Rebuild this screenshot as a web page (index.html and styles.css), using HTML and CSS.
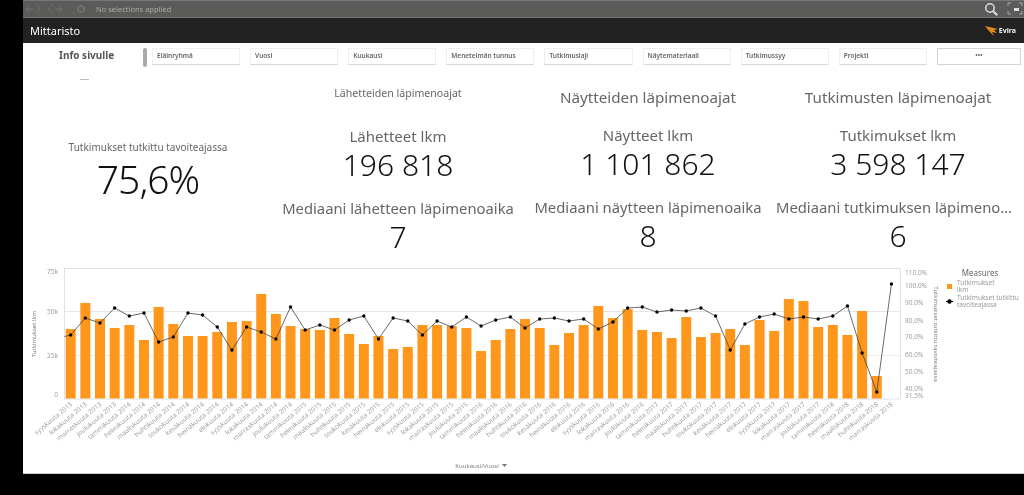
FILE: index.html
```html
<!DOCTYPE html>
<html lang="fi">
<head>
    <meta charset="UTF-8">
    <title>Mittaristo</title>
    <link rel="stylesheet" href="styles.css">
    <script src="chart.js" defer></script>
</head>
<body>
    <div class="app">
        <div class="toolbar">
            <div class="tool-icons">
                <svg width="16" height="12" viewBox="0 0 16 12"><path d="M1 6h7M4 3 1 6l3 3M11 2h2M11 10h2M14 4v4" fill="none" stroke="#727270" stroke-width="1"/></svg>
                <svg width="16" height="12" viewBox="0 0 16 12"><path d="M3 2h2M3 10h2M1 4v4M7 6h7M11 3l3 3-3 3" fill="none" stroke="#727270" stroke-width="1"/></svg>
                <svg width="16" height="12" viewBox="0 0 16 12"><path d="M1 2v2M1 8v2M3 1h1M3 11h1" fill="none" stroke="#727270"/><circle cx="10" cy="6" r="3" fill="none" stroke="#727270" stroke-width="1.5"/></svg>
            </div>
            <span class="no-selections">No selections applied</span>
            <div class="tool-right">
                <svg width="16" height="16" viewBox="0 0 16 16"><circle cx="7" cy="7" r="4.2" fill="none" stroke="#ddd" stroke-width="1.5"/><path d="M10.2 10.2l4 4" stroke="#ddd" stroke-width="2"/></svg>
                <svg width="16" height="14" viewBox="0 0 16 14"><path d="M1 4V1h3M12 1h3v3M1 9v3h3M15 9v3h-3" fill="none" stroke="#aaa"/><rect x="7" y="6" width="5" height="3" fill="#ddd"/></svg>
            </div>
        </div>

        <header class="titlebar">
            <span class="app-title">Mittaristo</span>
            <span class="logo">
                <svg width="14" height="12" viewBox="0 0 14 12"><path d="M0 1 13 4 9 5 12 8 7 7 9 11 4 6Z" fill="#e08a1c"/></svg>
                Evira
            </span>
        </header>

        <div class="filters">
            <div class="info-cell">
                <b>Info sivulle</b>
                <i class="dash"></i>
            </div>
            <div class="handle"></div>
            <div class="filter-list">
                <div class="filter">Eläinryhmä</div>
                <div class="filter">Vuosi</div>
                <div class="filter">Kuukausi</div>
                <div class="filter">Menetelmän tunnus</div>
                <div class="filter">Tutkimuslaji</div>
                <div class="filter">Näytemateriaali</div>
                <div class="filter">Tutkimussyy</div>
                <div class="filter">Projekti</div>
                <div class="filter more">•••</div>
            </div>
        </div>

        <main class="kpis">
            <section class="kpi-col first">
                <h3 class="small-title">Tutkimukset tutkittu tavoiteajassa</h3>
                <div class="big-value">75,6%</div>
            </section>
            <section class="kpi-col">
                <h2 class="col-title tiny">Lähetteiden läpimenoajat</h2>
                <h3 class="kpi-label">Lähetteet lkm</h3>
                <div class="kpi-value">196 818</div>
                <h3 class="kpi-label median">Mediaani lähetteen läpimenoaika</h3>
                <div class="kpi-value">7</div>
            </section>
            <section class="kpi-col">
                <h2 class="col-title">Näytteiden läpimenoajat</h2>
                <h3 class="kpi-label">Näytteet lkm</h3>
                <div class="kpi-value">1 101 862</div>
                <h3 class="kpi-label median">Mediaani näytteen läpimenoaika</h3>
                <div class="kpi-value">8</div>
            </section>
            <section class="kpi-col">
                <h2 class="col-title">Tutkimusten läpimenoajat</h2>
                <h3 class="kpi-label">Tutkimukset lkm</h3>
                <div class="kpi-value">3 598 147</div>
                <h3 class="kpi-label median clip">Mediaani tutkimuksen läpimenoaika</h3>
                <div class="kpi-value">6</div>
            </section>
        </main>

        <div class="chart-wrap">
            <svg id="chart" width="1001" height="212" viewBox="23 262 1001 212"></svg>
        </div>
    </div>
</body>
</html>
```

FILE: styles.css
```css
html, body {
    margin: 0;
    padding: 0;
    height: 495px;
    overflow: hidden;
    background-color: #000;
    font-family: "Noto Sans", sans-serif;
}

.app {
    margin-left: 23px;
    width: 1001px;
    height: 474px;
    background-color: #fff;
    display: flex;
    flex-direction: column;
    filter: blur(0.5px);
}

.toolbar {
    height: 18px;
    box-sizing: border-box;
    background-color: #5b5b59;
    border-top: 1px solid #777;
    border-bottom: 1px solid #777;
    display: flex;
    align-items: center;
    color: #a8a8a6;
    font-size: 7.5px;
}

.tool-icons {
    display: flex;
    gap: 7px;
    width: 73px;
    padding-left: 2px;
    box-sizing: border-box;
}

.no-selections {
    flex: 1;
}

.tool-right {
    display: flex;
    gap: 8px;
    align-items: center;
    padding-right: 1px;
}

.titlebar {
    height: 25px;
    background-color: #222;
    color: #fff;
    display: flex;
    align-items: center;
    justify-content: space-between;
    padding: 0 8px 0 7px;
}

.app-title {
    font-size: 11px;
}

.logo {
    display: flex;
    align-items: center;
    gap: 0;
    color: #eee;
    font-size: 7px;
    font-weight: 700;
}

.filters {
    height: 30px;
    display: flex;
    padding-top: 5px;
    box-sizing: border-box;
}

.info-cell {
    width: 120px;
    position: relative;
    color: #555;
    font-size: 10px;
    padding-left: 36px;
    box-sizing: border-box;
    line-height: 14px;
}

.dash {
    position: absolute;
    left: 57px;
    top: 31px;
    width: 9px;
    height: 1px;
    background-color: #bbb;
}

.handle {
    width: 4px;
    height: 19px;
    background-color: #aaa;
    border-radius: 2px;
}

.filter-list {
    flex: 1;
    display: flex;
    gap: 10px;
    margin: 0 3px 0 5px;
}

.filter {
    flex: 1;
    height: 17px;
    box-sizing: border-box;
    border: 1px solid #efefef;
    border-bottom-color: #d8d8d8;
    font-size: 6.5px;
    font-weight: 600;
    color: #666;
    line-height: 14px;
    padding-left: 4px;
}

.filter.more {
    text-align: center;
    padding: 0;
    border-color: #d4d4d4;
}

.kpis {
    height: 189px;
    display: flex;
}

.kpi-col {
    width: 250px;
    min-width: 0;
    text-align: center;
    color: #666;
}

.kpi-col.first {
    padding-top: 66px;
}

.kpi-col h2, .kpi-col h3 {
    margin: 0;
    font-weight: 400;
}

.small-title {
    font-size: 10px;
    line-height: 16px;
}

.big-value {
    font-size: 39px;
    line-height: 48px;
    color: #111;
    letter-spacing: -1px;
    font-weight: 300;
}

.col-title {
    font-size: 15.2px;
    line-height: 20px;
    height: 38px;
    padding-top: 14px;
}

.col-title.tiny {
    font-size: 10.6px;
    line-height: 14px;
    height: 40px;
    padding-top: 13px;
}

.kpi-label {
    font-size: 15px;
    line-height: 20px;
}

.kpi-label.median {
    margin-top: 14px !important;
    font-size: 14.8px;
    white-space: nowrap;
}

.kpi-label.clip {
    overflow: hidden;
    text-overflow: ellipsis;
    margin-left: 3px;
    margin-right: 9px;
}

.kpi-value {
    font-size: 30px;
    line-height: 38px;
    color: #111;
    font-weight: 300;
}

.chart-wrap {
    height: 212px;
    border-bottom: 1px solid #ccc;
    box-sizing: border-box;
}

#chart {
    display: block;
}

.tick {
    font-size: 6.5px;
    fill: #a0a0a0;
}

.axis-title {
    font-size: 6px;
    fill: #808080;
}

.legend-title {
    font-size: 8px;
    fill: #666;
}

.legend-text {
    font-size: 6.5px;
    fill: #999;
}
```

FILE: chart.js
```js
// bar tops and line points, in plot pixels
var barTops = [329, 303, 319, 328, 325, 340, 307, 324, 336, 336, 332, 322, 321, 294, 314, 326, 329, 330, 318, 334,
    344, 336, 349, 347, 325, 325, 326, 328, 351, 340, 329, 319, 328, 345, 333, 325, 306, 318, 309, 330,
    332, 338, 317, 337, 333, 329, 345, 320, 331, 299, 301, 327, 325, 335, 311, 376];
var linePts = [335, 318, 323, 308, 316, 313, 342, 337, 313, 315, 327, 350, 327, 332, 339, 307, 330, 325, 330, 320,
    316, 339, 318, 321, 335, 321, 327, 317, 326, 320, 317, 328, 319, 318, 321, 319, 329, 322, 308, 307,
    312, 310, 311, 308, 316, 350, 324, 317, 314, 319, 317, 319, 316, 306, 353, 392, 284];
var months = ["tammikuuta", "helmikuuta", "maaliskuuta", "huhtikuuta", "toukokuuta", "kesäkuuta", "heinäkuuta",
    "elokuuta", "syyskuuta", "lokakuuta", "marraskuuta", "joulukuuta"];

var x0 = 70.7, step = 14.656, base = 398.5;
var svg = "";

function line(x1, y1, x2, y2, color) {
    return '<line x1="' + x1 + '" y1="' + y1 + '" x2="' + x2 + '" y2="' + y2 + '" stroke="' + color + '"/>';
}

function text(cls, x, y, anchor, str, extra) {
    return '<text class="' + cls + '" x="' + x + '" y="' + y + '" text-anchor="' + anchor + '"' + (extra || "") + '>' + str + '</text>';
}

// grid
svg += line(64, 268.5, 900, 268.5, "#e2e2e2");
svg += line(64, 311.5, 900, 311.5, "#e6e6e6");
svg += line(64, 355.5, 900, 355.5, "#eeeeee");
svg += line(64.5, 268, 64.5, 399, "#e2e2e2");
svg += line(900.5, 268, 900.5, 399, "#e2e2e2");
svg += line(64, 399, 900, 399, "#d8e4ee");

// left axis
[["75k", 274], ["50k", 314], ["25k", 358], ["0", 397]].forEach(function (t) {
    svg += text("tick", 58, t[1], "end", t[0]);
});
svg += text("axis-title", 36, 334, "middle", "Tutkimukset lkm", ' transform="rotate(-90 36 334)"');

// right axis
[["110.0%", 275], ["100.0%", 288], ["90.0%", 305], ["80.0%", 323], ["70.0%", 339], ["60.0%", 357],
    ["50.0%", 374], ["40.0%", 391], ["31.5%", 398]].forEach(function (t) {
    svg += text("tick", 905, t[1], "start", t[0]);
});
svg += text("axis-title", 934, 334, "middle", "Tutkimukset tutkittu tavoiteajassa", ' transform="rotate(90 934 334)"');

// bars
barTops.forEach(function (top, i) {
    svg += '<rect x="' + (x0 + i * step - 5) + '" y="' + top + '" width="10" height="' + (base - top) + '" fill="#ff971d"/>';
});

// line with a stub coming in from the left edge
var pts = "64.5,336.5";
linePts.forEach(function (y, i) {
    pts += " " + (x0 + i * step) + "," + y;
});
svg += '<polyline points="' + pts + '" fill="none" stroke="#444" stroke-width="0.8"/>';
linePts.forEach(function (y, i) {
    svg += '<circle cx="' + (x0 + i * step) + '" cy="' + y + '" r="1.7" fill="#000"/>';
});

// month labels, syyskuu 2013 -> huhtikuu 2018 and then marraskuu 2018
for (var i = 0; i < 57; i++) {
    var total = 8 + i;
    var label = months[total % 12] + " " + (2013 + Math.floor(total / 12));
    if (i == 56) label = "marraskuuta 2018";
    var x = x0 + i * step + 2;
    svg += text("tick", x, 405, "end", label, ' transform="rotate(-40 ' + x + ' 405)"');
}

svg += text("axis-title", 477, 468, "middle", "Kuukausi/Vuosi");
svg += '<path d="M502 464h5l-2.5 3z" fill="#777"/>';

// legend
svg += text("legend-title", 980, 276, "middle", "Measures");
svg += '<rect x="947" y="284" width="5" height="5" fill="#ff971d"/>';
svg += text("legend-text", 957, 285, "start", "Tutkimukset");
svg += text("legend-text", 957, 292, "start", "lkm");
svg += line(946, 301.5, 953, 301.5, "#000");
svg += '<circle cx="949.5" cy="301.5" r="2.2" fill="#000"/>';
svg += text("legend-text", 957, 300, "start", "Tutkimukset tutkittu");
svg += text("legend-text", 957, 307, "start", "tavoiteajassa");

document.getElementById("chart").innerHTML = svg;
```
